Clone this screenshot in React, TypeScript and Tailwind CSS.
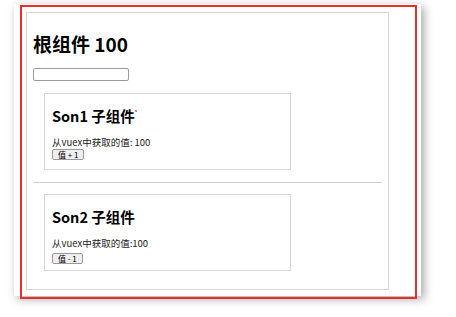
const font = { fontFamily: '"Noto Sans CJK SC", "Noto Sans", sans-serif' };

type SonProps = {
  title: string;
  label: string;
  btn: string;
  dot?: boolean;
  gap: string;
};

const Son = ({ title, label, btn, dot, gap }: SonProps) => {
  return (
    <div className="ml-[11px] h-[77px] w-[247px] border-[1.5px] border-[#d6d6d6] pl-[7px] pt-[15px]">
      <h3 className="relative w-fit text-[14.5px] leading-[14px] font-bold text-black">
        {title}
        {dot && (
          <span className="absolute -right-[2px] top-[1px] h-[2px] w-[2px] rounded-full bg-[#e0407a]" />
        )}
      </h3>
      <p className="mt-[14px] text-[9.5px] leading-[11px] text-[#222]">{label}</p>
      <button
        className={`${gap} flex h-[11px] items-center rounded-[2px] border border-[#9a9a9a] bg-[#efefef] px-[5px] text-[8px] leading-none text-black`}
      >
        {btn}
      </button>
    </div>
  );
};

export default function App() {
  return (
    <div className="h-[317px] w-[456px] overflow-hidden bg-white pl-[14px] pt-[4px]" style={font}>
      <div className="h-[292px] w-[407px] bg-white pl-[6px] pt-[1px] shadow-[3px_3px_9px_rgba(0,0,0,0.35)]">
        <div className="h-[294px] w-[397px] border-2 border-[#e8302a] pl-[4px] pt-[5px]">
          <div className="h-[278px] w-[363px] border-[1.5px] border-[#d6d6d6] px-[6px] pt-[21px]">
            <h1 className="text-[19px] leading-[19px] font-bold text-black">根组件 100</h1>
            <input
              className="mt-[15px] block h-[13px] w-[96px] rounded-[2px] border border-[#9a9a9a] bg-white"
              defaultValue=""
            />
            <div className="mt-[12px]">
              <Son title="Son1 子组件" label="从vuex中获取的值: 100" btn="值 + 1" dot gap="mt-[1px]" />
            </div>
            <hr className="mt-[12px] border-t border-[#cfcfcf]" />
            <div className="mt-[11px]">
              <Son title="Son2 子组件" label="从vuex中获取的值:100" btn="值 - 1" gap="mt-[4px]" />
            </div>
          </div>
        </div>
      </div>
    </div>
  );
}
